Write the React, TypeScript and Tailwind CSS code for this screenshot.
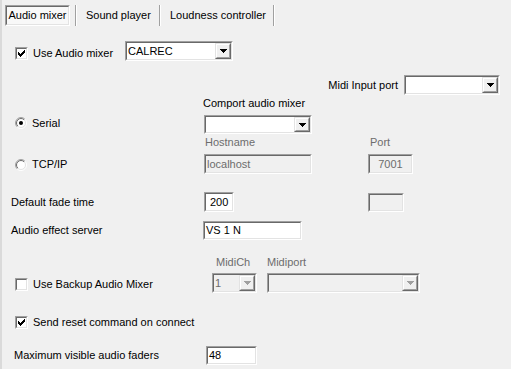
import React from "react";

const CHECK = [
  [6, 0, 3],
  [5, 1, 3],
  [4, 2, 3],
  [3, 3, 3],
  [2, 4, 3],
  [1, 3, 3],
  [0, 2, 3],
];

function CheckMark() {
  return (
    <svg width="7" height="7" viewBox="0 0 7 7" shapeRendering="crispEdges">
      {CHECK.map(([x, y, h]) => (
        <rect key={x} x={x} y={y} width="1" height={h} fill="#000" />
      ))}
    </svg>
  );
}

function Arrow({ disabled }: { disabled?: boolean }) {
  const c = disabled ? "#a0a0a0" : "#000";
  return (
    <svg width="7" height="4" viewBox="0 0 7 4" shapeRendering="crispEdges">
      <rect x="0" y="0" width="7" height="1" fill={c} />
      <rect x="1" y="1" width="5" height="1" fill={c} />
      <rect x="2" y="2" width="3" height="1" fill={c} />
      <rect x="3" y="3" width="1" height="1" fill={c} />
    </svg>
  );
}

function Field({
  cls,
  bg = "bg-white",
  inner = "",
  children,
}: {
  cls: string;
  bg?: string;
  inner?: string;
  children?: React.ReactNode;
}) {
  return (
    <div
      className={`${cls} flex border border-t-[#a0a0a0] border-l-[#a0a0a0] border-b-white border-r-white`}
    >
      <div
        className={`flex-1 flex items-center min-w-0 border border-t-[#696969] border-l-[#696969] border-b-[#e3e3e3] border-r-[#e3e3e3] ${bg} ${inner}`}
      >
        {children}
      </div>
    </div>
  );
}

function DropButton({ disabled }: { disabled?: boolean }) {
  return (
    <div className="w-[16px] self-stretch flex border border-t-[#e3e3e3] border-l-[#e3e3e3] border-b-[#696969] border-r-[#696969]">
      <div className="flex-1 flex items-center justify-center border border-t-white border-l-white border-b-[#a0a0a0] border-r-[#a0a0a0] bg-[#f0f0f0]">
        <Arrow disabled={disabled} />
      </div>
    </div>
  );
}

function Combo({
  cls,
  text,
  disabled,
}: {
  cls: string;
  text?: string;
  disabled?: boolean;
}) {
  return (
    <Field cls={cls} bg={disabled ? "bg-[#f0f0f0]" : "bg-white"}>
      <span
        className={`flex-1 pl-[1px] whitespace-nowrap ${disabled ? "text-[#6d6d6d]" : "text-black"}`}
      >
        {text}
      </span>
      <DropButton disabled={disabled} />
    </Field>
  );
}

function CheckBox({ checked, label }: { checked?: boolean; label: string }) {
  return (
    <div className="flex items-center gap-[5px]">
      <Field cls="w-[13px] h-[13px]" inner="justify-center">
        {checked ? <CheckMark /> : null}
      </Field>
      <span className="whitespace-nowrap">{label}</span>
    </div>
  );
}

function Radio({ checked, label }: { checked?: boolean; label: string }) {
  return (
    <div className="flex items-center gap-[5px]">
      <svg width="12" height="12" viewBox="0 0 12 12">
        <defs>
          <linearGradient id="ro" x1="0" y1="0" x2="1" y2="1">
            <stop offset="0.45" stopColor="#a0a0a0" />
            <stop offset="0.55" stopColor="#ffffff" />
          </linearGradient>
          <linearGradient id="ri" x1="0" y1="0" x2="1" y2="1">
            <stop offset="0.45" stopColor="#696969" />
            <stop offset="0.55" stopColor="#e3e3e3" />
          </linearGradient>
        </defs>
        <circle cx="6" cy="6" r="5.5" fill="none" stroke="url(#ro)" strokeWidth="1" />
        <circle cx="6" cy="6" r="4.5" fill="#fff" stroke="url(#ri)" strokeWidth="1" />
        {checked ? <circle cx="6" cy="6" r="2" fill="#000" /> : null}
      </svg>
      <span className="whitespace-nowrap">{label}</span>
    </div>
  );
}

function Sep() {
  return <div className="w-[2px] h-[21px] border-l border-l-[#a0a0a0] border-r border-r-white" />;
}

export default function App() {
  return (
    <div className="w-[511px] h-[369px] overflow-hidden bg-[#f0f0f0] border-l-2 border-l-[#dadada] flex flex-col font-['Liberation_Sans',Arial,sans-serif] text-[11px] leading-[13px] text-black">
      {/* Tabs */}
      <div className="h-[27px] pt-[5px] pl-[3px] flex items-start">
        <div className="w-[65px] h-[21px] flex border border-t-[#a0a0a0] border-l-[#a0a0a0] border-b-white border-r-white">
          <div className="flex-1 flex items-center justify-center border border-t-[#696969] border-l-[#696969] border-b-[#e3e3e3] border-r-[#e3e3e3] bg-[#f8f8f8]">
            Audio mixer
          </div>
        </div>
        <div className="ml-[5px]">
          <Sep />
        </div>
        <div className="w-[82px] h-[21px] flex items-center pl-[9px]">Sound player</div>
        <Sep />
        <div className="w-[112px] h-[21px] flex items-center pl-[9px]">Loudness controller</div>
        <Sep />
      </div>

      {/* Row 1 */}
      <div className="mt-[14px] h-[20px] pl-[13px] flex items-start">
        <div className="w-[110px] mt-[6px]">
          <CheckBox checked label="Use Audio mixer" />
        </div>
        <Combo cls="w-[108px] h-[20px]" text="CALREC" />
      </div>

      {/* Row 2 */}
      <div className="mt-[14px] h-[20px] pr-[11px] flex items-center justify-end">
        <span className="mr-[6px]">Midi Input port</span>
        <Combo cls="w-[96px] h-[20px]" />
      </div>

      {/* Row 3 */}
      <div className="mt-[1px] h-[14px] pl-[201px] flex items-center">Comport audio mixer</div>

      {/* Row 4 */}
      <div className="mt-[5px] h-[19px] pl-[13px] flex items-center">
        <div className="w-[189px] mb-[3px]">
          <Radio checked label="Serial" />
        </div>
        <Combo cls="w-[108px] h-[19px]" />
      </div>

      {/* Row 5 */}
      <div className="mt-[1px] h-[14px] pl-[203px] flex items-center text-[#6d6d6d]">
        <span className="w-[165px]">Hostname</span>
        <span>Port</span>
      </div>

      {/* Row 6 */}
      <div className="mt-[5px] h-[20px] pl-[13px] flex items-center">
        <div className="w-[189px] mt-[1px]">
          <Radio label="TCP/IP" />
        </div>
        <Field cls="w-[108px] h-[20px]" bg="bg-[#f0f0f0]">
          <span className="pl-[1px] text-[#6d6d6d]">localhost</span>
        </Field>
        <Field cls="ml-[56px] w-[45px] h-[20px]" bg="bg-[#f0f0f0]" inner="justify-center">
          <span className="text-[#6d6d6d]">7001</span>
        </Field>
      </div>

      {/* Row 7 */}
      <div className="mt-[18px] h-[20px] pl-[9px] flex items-center">
        <span className="w-[193px]">Default fade time</span>
        <Field cls="w-[30px] h-[20px]">
          <span className="pl-[4px]">200</span>
        </Field>
        <Field cls="ml-[134px] w-[36px] h-[19px]" bg="bg-[#f0f0f0]" />
      </div>

      {/* Row 8 */}
      <div className="mt-[9px] h-[19px] pl-[9px] flex items-center">
        <span className="w-[192px]">Audio effect server</span>
        <Field cls="w-[99px] h-[19px]">
          <span className="pl-[1px]">VS 1 N</span>
        </Field>
      </div>

      {/* Row 9 */}
      <div className="mt-[15px] h-[14px] pl-[214px] flex items-center text-[#6d6d6d]">
        <span className="w-[51px]">MidiCh</span>
        <span>Midiport</span>
      </div>

      {/* Row 10 */}
      <div className="mt-[4px] h-[20px] pl-[13px] flex items-center">
        <div className="w-[197px] mt-[2px]">
          <CheckBox label="Use Backup Audio Mixer" />
        </div>
        <Combo cls="w-[45px] h-[20px]" text="1" disabled />
        <Combo cls="ml-[10px] w-[153px] h-[20px]" disabled />
      </div>

      {/* Row 11 */}
      <div className="mt-[22px] h-[14px] pl-[13px] flex items-center">
        <CheckBox checked label="Send reset command on connect" />
      </div>

      {/* Row 12 */}
      <div className="mt-[17px] h-[19px] pl-[12px] flex items-center">
        <span className="w-[192px]">Maximum visible audio faders</span>
        <Field cls="w-[51px] h-[19px]">
          <span className="pl-[1px]">48</span>
        </Field>
      </div>
    </div>
  );
}
